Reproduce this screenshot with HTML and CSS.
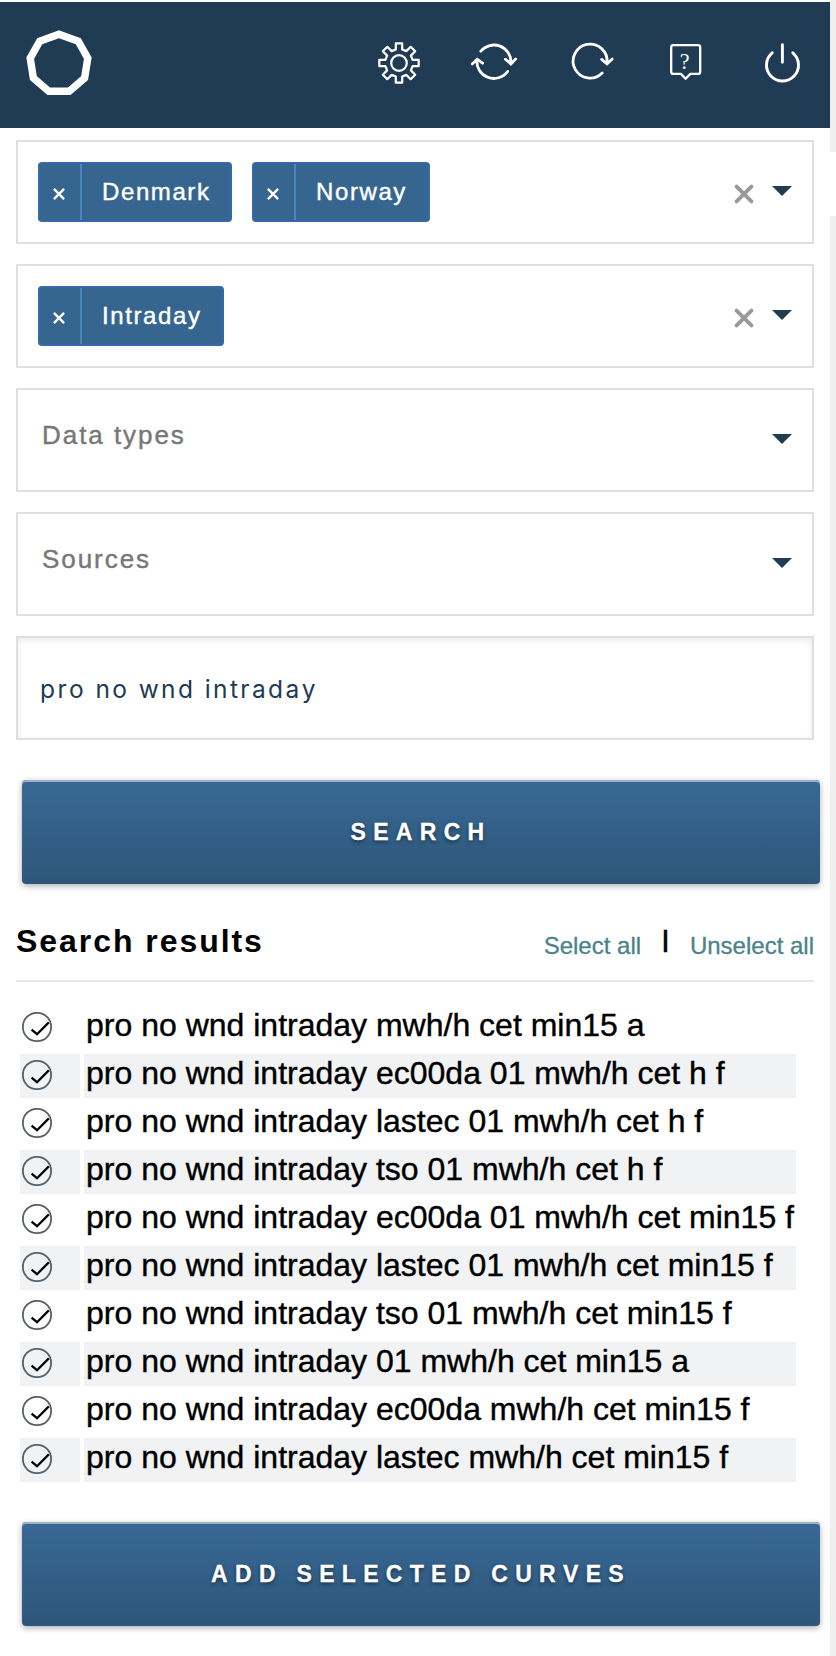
FILE: index.html
```html
<!DOCTYPE html>
<html lang="en">
<head>
<meta charset="utf-8">
<title>Curve search</title>
<link rel="stylesheet" href="styles.css">
</head>
<body>
<svg class="defs" width="0" height="0" aria-hidden="true">
  <symbol id="check" viewBox="0 0 30 30">
    <rect x=".9" y=".9" width="28.2" height="28.2" rx="13.8" fill="none" stroke="#566066" stroke-width="1.8"/>
    <path d="M9.6 17.6 15 22.2 26.8 10.4" fill="none" stroke="#000" stroke-width="2.2"/>
  </symbol>
  <symbol id="remove" viewBox="0 0 14 14">
    <path d="M1.9 1.9 12.1 12.1M12.1 1.9 1.9 12.1" stroke="#fff" stroke-width="2.4"/>
  </symbol>
  <symbol id="clear" viewBox="0 0 20 20">
    <path d="M2.6 2.6 17.4 17.4M17.4 2.6 2.6 17.4" stroke="#999" stroke-width="3.8" stroke-linecap="round"/>
  </symbol>
</svg>
<div class="app">
  <main class="panel">
    <header class="topbar">
      <svg class="logo" viewBox="23 29 72 72"><path d="M59 34.2 78.3 41.3 87.8 58.2 84.6 78 69.2 91.2H48.8L33.4 78 30.2 58.2 39.7 41.3Z" fill="none" stroke="#fff" stroke-width="7.4"/></svg>
      <nav class="tools">
        <svg class="tool" viewBox="375 41 48 48"><g transform="translate(399 63)" stroke-width="2.2"><path stroke-linejoin="round" d="M-3.2-13.6V-19.7H3.2V-13.6L7.35-11.88 11.67-16.19 16.19-11.67 11.88-7.35 13.6-3.2H19.7V3.2H13.6L11.88 7.35 16.19 11.67 11.67 16.19 7.35 11.88 3.2 13.6V19.7H-3.2V13.6L-7.35 11.88-11.67 16.19-16.19 11.67-11.88 7.35-13.6 3.2H-19.7V-3.2H-13.6L-11.88-7.35-16.19-11.67-11.67-16.19-7.35-11.88Z"/><circle r="7.8"/></g></svg>
        <svg class="tool" viewBox="471 41 48 48"><path d="M480.8 51.2A17 17 0 0 1 510.9 63M505.4 59.2 510.9 64 515.7 58.9M507.6 71.5A17 17 0 0 1 477 59.5M472.2 63.9 477.2 59.2 482.6 63.2"/></svg>
        <svg class="tool" viewBox="567 41 48 48"><path d="M602.2 73.1A17 17 0 1 1 607 63M601.6 59.4 607 63.8 612.2 58.9"/></svg>
        <svg class="tool" viewBox="663 41 48 48"><path stroke-width="2.3" stroke-linejoin="round" d="M673.2 45.2H698Q700.2 45.2 700.2 47.4V71.7Q700.2 73.9 698 73.9H690.4L685.6 78.7 680.9 73.9H673.2Q671.2 73.9 671.2 71.7V47.4Q671.2 45.2 673.2 45.2Z"/><text class="help-mark" transform="translate(684.7 69) scale(.92 1)">?</text></svg>
        <svg class="tool" viewBox="759 41 48 48"><path stroke-width="2.9" d="M772.2 52.8A16 16 0 1 0 792.8 52.8M782.4 44.8V62.3"/></svg>
      </nav>
    </header>

    <form class="filters">
      <div class="field">
        <div class="tags">
          <span class="tag tag-denmark"><svg class="tag-x"><use href="#remove"/></svg><span class="tag-label">Denmark</span></span>
          <span class="tag tag-norway"><svg class="tag-x"><use href="#remove"/></svg><span class="tag-label">Norway</span></span>
        </div>
        <svg class="clear"><use href="#clear"/></svg>
        <i class="caret"></i>
      </div>
      <div class="field">
        <div class="tags">
          <span class="tag tag-intraday"><svg class="tag-x"><use href="#remove"/></svg><span class="tag-label">Intraday</span></span>
        </div>
        <svg class="clear"><use href="#clear"/></svg>
        <i class="caret"></i>
      </div>
      <div class="field"><span class="placeholder">Data types</span><i class="caret"></i></div>
      <div class="field"><span class="placeholder">Sources</span><i class="caret"></i></div>
      <div class="field field-input"><span class="query">pro no wnd intraday</span></div>
    </form>

    <div class="button">SEARCH</div>

    <section class="results">
      <div class="results-head">
        <h2 class="results-title">Search results</h2>
        <div class="results-links"><a>Select all</a><span class="bar">I</span><a>Unselect all</a></div>
      </div>
      <div class="rows">
        <div class="row"><span class="pick"><svg class="check"><use href="#check"/></svg></span><span class="name">pro no wnd intraday mwh/h cet min15 a</span></div>
        <div class="row"><span class="pick"><svg class="check"><use href="#check"/></svg></span><span class="name">pro no wnd intraday ec00da 01 mwh/h cet h f</span></div>
        <div class="row"><span class="pick"><svg class="check"><use href="#check"/></svg></span><span class="name">pro no wnd intraday lastec 01 mwh/h cet h f</span></div>
        <div class="row"><span class="pick"><svg class="check"><use href="#check"/></svg></span><span class="name">pro no wnd intraday tso 01 mwh/h cet h f</span></div>
        <div class="row"><span class="pick"><svg class="check"><use href="#check"/></svg></span><span class="name">pro no wnd intraday ec00da 01 mwh/h cet min15 f</span></div>
        <div class="row"><span class="pick"><svg class="check"><use href="#check"/></svg></span><span class="name">pro no wnd intraday lastec 01 mwh/h cet min15 f</span></div>
        <div class="row"><span class="pick"><svg class="check"><use href="#check"/></svg></span><span class="name">pro no wnd intraday tso 01 mwh/h cet min15 f</span></div>
        <div class="row"><span class="pick"><svg class="check"><use href="#check"/></svg></span><span class="name">pro no wnd intraday 01 mwh/h cet min15 a</span></div>
        <div class="row"><span class="pick"><svg class="check"><use href="#check"/></svg></span><span class="name">pro no wnd intraday ec00da mwh/h cet min15 f</span></div>
        <div class="row"><span class="pick"><svg class="check"><use href="#check"/></svg></span><span class="name">pro no wnd intraday lastec mwh/h cet min15 f</span></div>
      </div>
    </section>

    <div class="button button-add">ADD SELECTED CURVES</div>
  </main>
  <aside class="rail"><div class="thumb"></div></aside>
</div>
</body>
</html>
```

FILE: styles.css
```css
* { box-sizing: border-box; }

body {
  margin: 0;
  background: #fff;
  color: #000;
  font-family: "Liberation Sans", Arial, sans-serif;
  font-kerning: none;
}

.defs { display: none; }

.app {
  display: grid;
  grid-template-columns: 830px 6px;
  height: 1656px;
  overflow: hidden;
}

.panel { padding-top: 2px; }

.rail { background: #efefef; padding-top: 152px; }
.thumb { height: 64px; background: #fff; }

/* Top bar */
.topbar {
  display: flex;
  align-items: center;
  justify-content: space-between;
  height: 126px;
  padding: 0 23px;
  background: #203b54;
}

.logo { width: 72px; height: 72px; }
.tools { display: flex; gap: 48px; }

.tool {
  width: 48px;
  height: 48px;
  fill: none;
  stroke: #fff;
  stroke-width: 2.8;
  stroke-linecap: round;
}

.help-mark {
  fill: #fff;
  stroke: none;
  font: 24px "Liberation Serif", serif;
  text-anchor: middle;
}

/* Filters */
.filters {
  display: flex;
  flex-direction: column;
  gap: 20px;
  padding: 12px 16px 0;
}

.field {
  display: flex;
  align-items: flex-start;
  height: 104px;
  padding: 0 20px;
  border: 2px solid #dfdfdf;
}

.tags { display: flex; gap: 20px; padding-top: 20px; }

.tag {
  display: flex;
  height: 60px;
  border: 2px solid #356aa8;
  border-radius: 4px;
  background: #36668f;
  color: #fff;
  font-size: 24px;
  line-height: 56px;
  -webkit-text-stroke: .4px;
}

.tag-denmark { width: 194px; }
.tag-norway { width: 178px; }
.tag-intraday { width: 186px; }

.tag-x { width: 14px; height: 14px; margin: 23px 12px 0; }

.tag-label {
  flex: 1;
  margin-left: 2px;
  padding-left: 20px;
  border-left: 2px solid #4a86bd;
  letter-spacing: 1.6px;
}

.clear { width: 20px; height: 20px; margin: 42px 0 0 auto; }

.caret {
  border: 10px solid transparent;
  border-top-color: #203b54;
  border-bottom: 0;
  margin: 44px 0 0 auto;
}

.clear + .caret { margin-left: 18px; }

.placeholder {
  padding: 30px 0 0 4px;
  color: #777;
  font-size: 26px;
  line-height: 30px;
  letter-spacing: 1.95px;
  -webkit-text-stroke: .4px;
}

.field-input { box-shadow: inset 0 2px 6px rgba(0, 0, 0, .09); }

.query {
  padding: 36px 0 0 2px;
  color: #203b54;
  font-family: Inter, "Liberation Sans", sans-serif;
  font-size: 24.5px;
  line-height: 30px;
  letter-spacing: 2.4px;
}

/* Buttons */
.button {
  height: 104px;
  margin: 40px 10px 0 22px;
  border-radius: 4px;
  background: linear-gradient(#386995, #2e567a);
  box-shadow: inset 0 2px 0 #9db2c6, 0 2px 6px rgba(0, 0, 0, .32);
  color: #fff;
  font-size: 23px;
  font-weight: bold;
  line-height: 104px;
  letter-spacing: 7.3px;
  text-align: center;
  text-shadow: 0 2px 4px rgba(0, 0, 0, .5);
  -webkit-text-stroke: .3px;
}

/* Results */
.results { padding: 0 16px; }

.results-head {
  display: flex;
  align-items: baseline;
  justify-content: space-between;
  height: 98px;
  padding-top: 38px;
  border-bottom: 2px solid #e9e9e9;
}

.results-title {
  margin: 0;
  font-size: 32px;
  line-height: 38px;
  letter-spacing: 1.95px;
}

.results-links {
  display: flex;
  align-items: baseline;
  color: #4a8489;
  font-size: 24px;
  line-height: 28px;
  -webkit-text-stroke: .3px;
}

.results-links a { position: relative; top: 2px; }
.bar { margin: 0 20px; color: #000; font-size: 32px; }

.rows {
  display: flex;
  flex-direction: column;
  gap: 4px;
  width: 776px;
  margin: 24px 0 0 4px;
}

.row {
  display: grid;
  grid-template-columns: 60px 712px;
  gap: 4px;
  height: 44px;
}

.row:nth-child(even) > * { background: #f1f2f4; }

.pick { padding: 6px 2px; }
.check { display: block; width: 30px; height: 30px; }

.name {
  padding-left: 2px;
  font-size: 32px;
  line-height: 38px;
  white-space: nowrap;
  -webkit-text-stroke: .4px;
}
```
